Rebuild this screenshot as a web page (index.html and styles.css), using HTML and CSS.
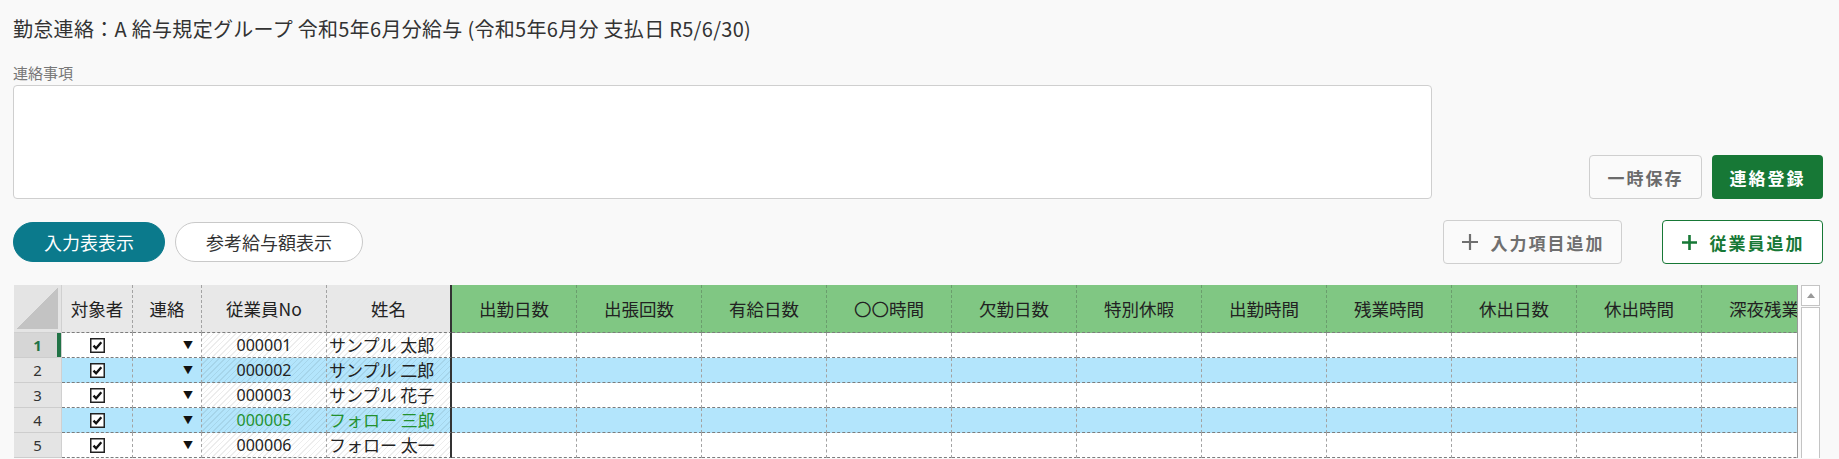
FILE: index.html
```html
<!DOCTYPE html>
<html lang="ja">
<head>
    <meta charset="UTF-8">
    <title>勤怠連絡</title>
    <link rel="stylesheet" href="styles.css">
</head>
<body>
    <div class="page">
        <h1 class="title">勤怠連絡：A 給与規定グループ 令和5年6月分給与 (令和5年6月分 支払日 R5/6/30)</h1>

        <div class="memo-label">連絡事項</div>
        <div class="memo-row">
            <textarea class="memo"></textarea>
            <div class="actions">
                <button class="btn btn-plain">一時保存</button>
                <button class="btn btn-green">連絡登録</button>
            </div>
        </div>

        <div class="tool-row">
            <div class="tabs">
                <button class="tab active">入力表表示</button>
                <button class="tab">参考給与額表示</button>
            </div>
            <div class="adds">
                <button class="btn btn-plain btn-add">
                    <svg width="18" height="18" viewBox="0 0 18 18"><path d="M9 1v16M1 9h16" stroke="currentColor" stroke-width="2.2"/></svg>
                    入力項目追加
                </button>
                <button class="btn btn-outline btn-add">
                    <svg width="17" height="17" viewBox="0 0 17 17"><path d="M8.5 1v15M1 8.5h15" stroke="currentColor" stroke-width="2.6"/></svg>
                    従業員追加
                </button>
            </div>
        </div>

        <div class="sheet-wrap">
            <div class="sheet">
                <div class="row head">
                    <div class="cell corner"></div>
                    <div class="cell gh">対象者</div>
                    <div class="cell gh">連絡</div>
                    <div class="cell gh">従業員No</div>
                    <div class="cell gh freeze">姓名</div>
                    <div class="cell hg">出勤日数</div>
                    <div class="cell hg">出張回数</div>
                    <div class="cell hg">有給日数</div>
                    <div class="cell hg">〇〇時間</div>
                    <div class="cell hg">欠勤日数</div>
                    <div class="cell hg">特別休暇</div>
                    <div class="cell hg">出勤時間</div>
                    <div class="cell hg">残業時間</div>
                    <div class="cell hg">休出日数</div>
                    <div class="cell hg">休出時間</div>
                    <div class="cell hg">深夜残業</div>
                </div>
                <div id="rows"></div>
            </div>
            <div class="vscroll">
                <div class="vs-up"><span></span></div>
                <div class="vs-track"></div>
            </div>
        </div>
    </div>

    <script>
        var staff = [
            { no: '000001', name: 'サンプル 太郎' },
            { no: '000002', name: 'サンプル 二郎' },
            { no: '000003', name: 'サンプル 花子' },
            { no: '000005', name: 'フォロー 三郎', follow: true },
            { no: '000006', name: 'フォロー 太一' }
        ];

        var check = '<svg width="15" height="15" viewBox="0 0 15 15"><rect x="0.75" y="0.75" width="13.5" height="13.5" fill="#fff" stroke="#222" stroke-width="1.5"/><path d="M3.5 7.6l2.6 2.7 5.2-6" fill="none" stroke="#111" stroke-width="2.3"/></svg>';

        var html = '';
        staff.forEach(function (s, i) {
            var cls = 'row';
            if (i % 2 === 1) cls += ' blue';
            if (s.follow) cls += ' follow';
            if (i === 0) cls += ' current';
            html += '<div class="' + cls + '">';
            html += '<div class="cell rh">' + (i + 1) + '</div>';
            html += '<div class="cell chk">' + check + '</div>';
            html += '<div class="cell drop">▼</div>';
            html += '<div class="cell ro num">' + s.no + '</div>';
            html += '<div class="cell ro name freeze">' + s.name + '</div>';
            for (var c = 0; c < 11; c++) {
                html += '<div class="cell"></div>';
            }
            html += '</div>';
        });
        document.getElementById('rows').innerHTML = html;
    </script>
</body>
</html>
```

FILE: styles.css
```css
html, body {
    margin: 0;
    height: 459px;
    overflow: hidden;
}

body {
    font-family: "Noto Sans CJK JP", "Noto Sans", sans-serif;
    background-color: #f9f9f9;
    color: #333;
}

.page {
    padding: 15px 16px 0 13px;
}

.title {
    margin: 0;
    font-size: 20px;
    font-weight: normal;
    line-height: 28px;
    letter-spacing: 0.3px;
    color: #333;
}

.memo-label {
    margin-top: 20px;
    font-size: 15px;
    line-height: 19px;
    color: #777;
}

.memo-row {
    display: flex;
    justify-content: space-between;
    align-items: flex-end;
    margin-top: 3px;
}

.memo {
    width: 1419px;
    height: 114px;
    box-sizing: border-box;
    border: 1px solid #cfcfcf;
    border-radius: 4px;
    background-color: #fff;
    resize: none;
    margin: 0;
}

.actions {
    display: flex;
    gap: 10px;
}

.btn {
    height: 44px;
    box-sizing: border-box;
    border-radius: 4px;
    font-family: inherit;
    font-size: 17px;
    font-weight: bold;
    letter-spacing: 2px;
    padding: 0;
    cursor: pointer;
}

.btn-plain {
    width: 113px;
    border: 1px solid #cfcfcf;
    background-color: #fafafa;
    color: #6b6b6b;
}

.btn-green {
    width: 111px;
    border: none;
    background-color: #177836;
    color: #fff;
}

.btn-outline {
    border: 1px solid #177836;
    background-color: #fff;
    color: #177836;
}

.btn-add {
    display: flex;
    align-items: center;
    justify-content: center;
    gap: 12px;
}

.adds .btn-plain {
    width: 179px;
    color: #6f6f6f;
}

.adds .btn-outline {
    width: 161px;
}

.tool-row {
    display: flex;
    justify-content: space-between;
    align-items: center;
    margin-top: 21px;
}

.tabs {
    display: flex;
    gap: 10px;
}

.tab {
    height: 40px;
    border-radius: 20px;
    border: 1px solid #c9c9c9;
    background-color: #fff;
    color: #333;
    font-family: inherit;
    font-size: 18px;
    width: 188px;
    padding: 0;
}

.tab.active {
    width: 152px;
    border-color: #0b7a8c;
    background-color: #0b7a8c;
    color: #fff;
}

.adds {
    display: flex;
    gap: 40px;
}

/* sheet */
.sheet-wrap {
    display: flex;
    margin-top: 21px;
    margin-left: 1px;
}

.sheet {
    width: 1783px;
    overflow: hidden;
    border-right: 1px solid #9a9a9a;
}

.row {
    display: grid;
    grid-template-columns: 48px 71px 69px 125px 125px repeat(11, 125px);
    height: 25px;
    background-color: #fff;
}

.row.head {
    height: 48px;
}

.cell {
    box-sizing: border-box;
    border-right: 1px dashed #a3a3a3;
    border-bottom: 1px dashed #7d7d7d;
    font-size: 16px;
    line-height: 24px;
    color: #222;
    white-space: nowrap;
    overflow: hidden;
}

.head .cell {
    display: flex;
    align-items: center;
    justify-content: center;
    font-size: 17.5px;
}

.corner {
    position: relative;
    background-color: #e4e4e4;
    border-right: 1px solid #d0d0d0;
    border-bottom: 1px solid #d0d0d0;
}

.corner::after {
    content: '';
    position: absolute;
    left: 2px;
    right: 3px;
    top: 3px;
    bottom: 3px;
    background: linear-gradient(to bottom right, transparent 50%, #c3c3c3 50%);
}

.gh {
    background-color: #e8e8e8;
}

.hg {
    background-color: #80c783;
    border-right-color: #6b9e6d;
}

.freeze {
    border-right: 2px solid #333;
}

.rh {
    background-color: #e4e4e4;
    border-right: 1px solid #d0d0d0;
    border-bottom: 1px solid #cdcdcd;
    text-align: center;
    font-family: "Noto Sans", sans-serif;
    font-size: 15px;
    color: #333;
}

.current .rh {
    background-color: #d6d6d6;
    color: #217346;
    font-weight: bold;
    box-shadow: inset -4px 0 0 #217346;
}

.chk {
    display: flex;
    align-items: center;
    justify-content: center;
}

.drop {
    text-align: right;
    padding-right: 8px;
    font-size: 10px;
    color: #111;
}

.ro {
    background-image: repeating-linear-gradient(135deg, rgba(0, 0, 0, 0.07) 0 1px, transparent 1px 4px);
}

.num {
    text-align: center;
    font-family: "Noto Sans", sans-serif;
    font-size: 16px;
}

.name {
    padding-left: 2px;
    font-size: 17px;
    line-height: 23px;
}

.blue .cell {
    background-color: #b3e5fc;
}

.blue .rh {
    background-color: #e4e4e4;
}

.follow .num,
.follow .name {
    color: #23912f;
}

.vscroll {
    width: 19px;
    margin-left: 3px;
    display: flex;
    flex-direction: column;
}

.vs-up {
    height: 19px;
    border: 1px solid #c4c4c4;
    background-color: #fff;
    display: flex;
    align-items: center;
    justify-content: center;
}

.vs-up span {
    width: 0;
    height: 0;
    border-left: 4px solid transparent;
    border-right: 4px solid transparent;
    border-bottom: 5px solid #999;
}

.vs-track {
    flex: 1;
    margin-top: 1px;
    border: 1px solid #c4c4c4;
    border-bottom: none;
    background-color: #fff;
}
```
